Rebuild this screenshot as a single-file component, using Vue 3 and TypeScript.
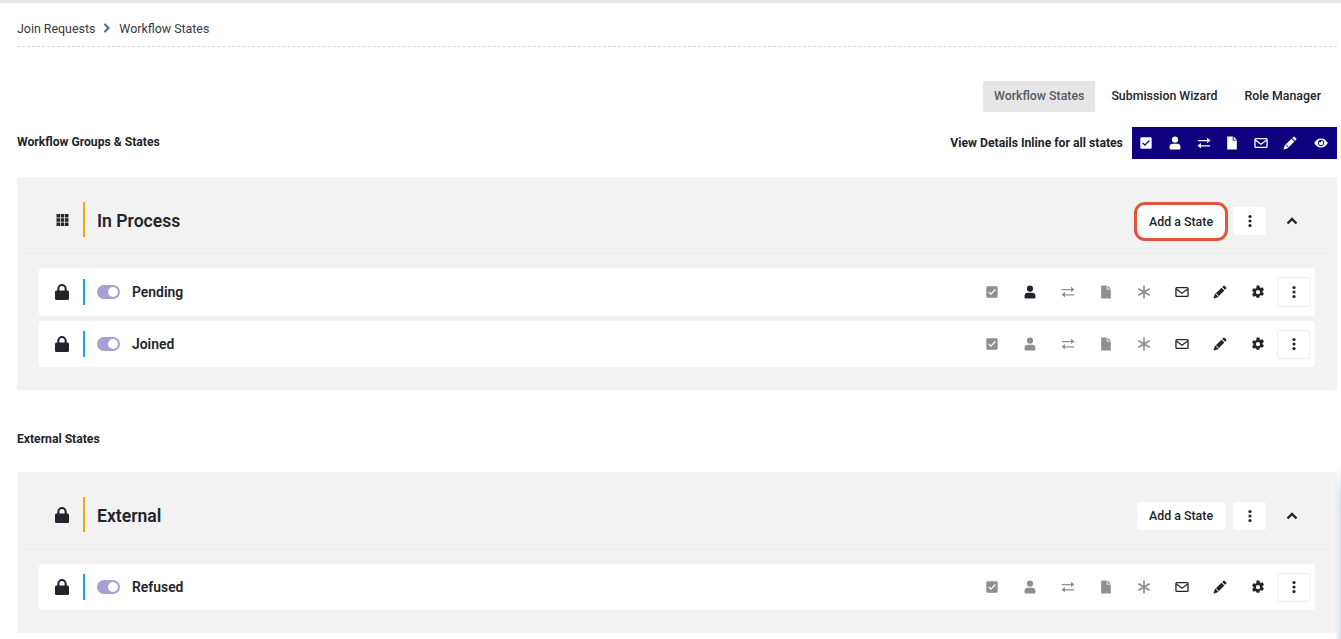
<script setup lang="ts">
interface StateRow {
  name: string
  userActive: boolean
}

interface Group {
  title: string
  icon: string
  highlight: boolean
  rows: StateRow[]
}

const groups: { heading: string; group: Group }[] = [
  {
    heading: 'Workflow Groups & States',
    group: {
      title: 'In Process',
      icon: 'grid',
      highlight: true,
      rows: [
        { name: 'Pending', userActive: true },
        { name: 'Joined', userActive: false },
      ],
    },
  },
  {
    heading: 'External States',
    group: {
      title: 'External',
      icon: 'lock',
      highlight: false,
      rows: [{ name: 'Refused', userActive: false }],
    },
  },
]

const tabs = ['Workflow States', 'Submission Wizard', 'Role Manager']
const toolbarIcons = ['check', 'user', 'swap', 'file', 'mail', 'pencil', 'eye']
</script>

<template>
  <svg class="sprite" aria-hidden="true">
    <symbol id="i-check" viewBox="0 0 16 16">
      <path fill-rule="evenodd" d="M3 1.500h10A1.500 1.500 0 0 1 14.500 3v10a1.500 1.500 0 0 1-1.500 1.500H3A1.500 1.500 0 0 1 1.500 13V3A1.500 1.500 0 0 1 3 1.500Zm9.400 4.300-1.100-1.100-4.600 4.600-2-2-1.100 1.100 3.100 3.100Z" />
    </symbol>
    <symbol id="i-user" viewBox="0 0 16 16">
      <circle cx="8" cy="4.200" r="3.500" />
      <path d="M1.800 14.700v-2.500c0-2 1.600-3.400 3.500-3.400h5.400c1.900 0 3.500 1.400 3.500 3.400v2.500c0 .5-.4.800-.8.800H2.600c-.4 0-.8-.3-.8-.8Z" />
    </symbol>
    <symbol id="i-swap" viewBox="0 0 16 16">
      <path d="M11.500 2 15.500 5l-4 3V6H1V4.500h10.500Z" />
      <path d="M4.500 8v2.500H15V12H4.500v2L.5 11Z" />
    </symbol>
    <symbol id="i-file" viewBox="0 0 16 16">
      <path d="M2.500.5h6.300v4.700h4.700v10.300h-11Z" />
      <path d="M9.800.5l3.700 3.700H9.800Z" />
    </symbol>
    <symbol id="i-star" viewBox="0 0 16 16">
      <path d="M7 .5h2v5.800l5-2.900 1 1.700L10 8l5 2.900-1 1.700-5-2.900v5.800H7V9.700l-5 2.900-1-1.700L6 8 1 5.100l1-1.700 5 2.900Z" />
    </symbol>
    <symbol id="i-mail" viewBox="0 0 16 16">
      <rect x="1.100" y="3" width="13.800" height="10" rx="1" fill="none" stroke="currentColor" stroke-width="1.500" />
      <path d="M1.500 4.500 8 9.300l6.500-4.800" fill="none" stroke="currentColor" stroke-width="1.400" />
    </symbol>
    <symbol id="i-pencil" viewBox="0 0 16 16">
      <path d="M11.700 1a1.200 1.200 0 0 1 1.700 0l1.600 1.600a1.200 1.200 0 0 1 0 1.700l-1.200 1.200-3.300-3.300Z" />
      <path fill-rule="evenodd" d="M9.700 3 13 6.300l-7.600 7.600-4.100 1.400a.5.500 0 0 1-.6-.6l1.400-4.100ZM3.100 10.300l2.700 2.700.6-.6-2.700-2.700Z" />
    </symbol>
    <symbol id="i-gear" viewBox="0 0 16 16">
      <path fill-rule="evenodd" d="M6.400.5h3.200l.4 2.100 1.200.7 2-.7 1.600 2.800-1.600 1.400v1.400l1.600 1.400-1.600 2.800-2-.7-1.200.7-.4 2.100H6.400L6 13.400l-1.200-.7-2 .7-1.600-2.800 1.600-1.400V7.800L1.200 6.400l1.600-2.800 2 .7L6 3.600ZM8 5.800a2.400 2.400 0 1 0 0 4.800 2.400 2.400 0 0 0 0-4.800Z" />
    </symbol>
    <symbol id="i-dots" viewBox="0 0 16 16">
      <circle cx="8" cy="2.800" r="1.800" />
      <circle cx="8" cy="8" r="1.800" />
      <circle cx="8" cy="13.200" r="1.800" />
    </symbol>
    <symbol id="i-eye" viewBox="0 0 16 16">
      <path fill-rule="evenodd" d="M8 2.800c3.400 0 6.200 2.100 7.800 5.200-1.600 3.100-4.400 5.200-7.800 5.200S1.800 11.100.2 8C1.800 4.900 4.600 2.800 8 2.800Zm0 1.400C6 4.200 4.400 5.900 4.400 8S6 11.800 8 11.800s3.600-1.700 3.600-3.800S10 4.200 8 4.200Zm0 1.300a2.500 2.500 0 1 1-2.500 2.500c0-.4.100-.8.300-1.100.2.300.6.600 1 .6.700 0 1.200-.5 1.200-1.200 0-.3-.1-.6-.3-.8H8Z" />
    </symbol>
    <symbol id="i-grid" viewBox="0 0 12 12">
      <path d="M0 0h3.500v3.500H0ZM4.250 0h3.500v3.500h-3.500ZM8.500 0H12v3.500H8.500ZM0 4.250h3.500v3.500H0ZM4.250 4.250h3.500v3.500h-3.500ZM8.500 4.250H12v3.500H8.500ZM0 8.500h3.500V12H0ZM4.250 8.500h3.500V12h-3.500ZM8.500 8.500H12V12H8.500Z" />
    </symbol>
    <symbol id="i-lock" viewBox="0 0 14 16">
      <path fill-rule="evenodd" d="M2.300 6.500V4.700a4.700 4.700 0 0 1 9.400 0v1.800h.7c.9 0 1.600.7 1.600 1.600v6.300c0 .9-.7 1.600-1.600 1.600H1.600C.7 16 0 15.300 0 14.400V8.100c0-.9.700-1.600 1.600-1.600ZM4.400 6.500h5.200V4.700a2.600 2.600 0 0 0-5.200 0Z" />
    </symbol>
  </svg>

  <div class="page">
    <nav class="crumbs">
      <span>Join Requests</span>
      <svg class="crumb-sep" viewBox="0 0 8 10"><path d="M1.500 1 5.500 5l-4 4" /></svg>
      <span>Workflow States</span>
    </nav>

    <div class="tabs">
      <button v-for="(tab, i) in tabs" :key="tab" class="tab" :class="{ active: i === 0 }">{{ tab }}</button>
    </div>

    <section v-for="(item, s) in groups" :key="item.heading" class="section" :class="{ second: s === 1 }">
      <div class="section-head">
        <h2>{{ item.heading }}</h2>
        <div v-if="s === 0" class="inline-details">
          <span>View Details Inline for all states</span>
          <div class="toolbar">
            <span v-for="icon in toolbarIcons" :key="icon" class="tool">
              <svg class="ico"><use :href="`#i-${icon}`" /></svg>
            </span>
          </div>
        </div>
      </div>

      <div class="group">
        <header class="group-head">
          <span class="lead">
            <svg :class="item.group.icon === 'grid' ? 'ico-grid' : 'ico-lock'"><use :href="`#i-${item.group.icon}`" /></svg>
          </span>
          <span class="bar gold"></span>
          <h3>{{ item.group.title }}</h3>
          <div class="group-actions">
            <button class="btn add" :class="{ marked: item.group.highlight }">Add a State</button>
            <button class="btn kebab"><svg class="ico"><use href="#i-dots" /></svg></button>
            <svg class="chevron" viewBox="0 0 12 8"><path d="M1.500 6.500 6 2l4.500 4.500" /></svg>
          </div>
        </header>

        <div class="rows">
          <div v-for="(row, r) in item.group.rows" :key="row.name" class="row" :class="{ tall: s === 0 && r === 0 }">
            <span class="lead"><svg class="ico-lock"><use href="#i-lock" /></svg></span>
            <span class="bar blue"></span>
            <span class="toggle"></span>
            <span class="row-name">{{ row.name }}</span>
            <div class="row-icons">
              <span class="cell muted"><svg class="ico"><use href="#i-check" /></svg></span>
              <span class="cell" :class="{ muted: !row.userActive }"><svg class="ico"><use href="#i-user" /></svg></span>
              <span class="cell muted"><svg class="ico"><use href="#i-swap" /></svg></span>
              <span class="cell muted"><svg class="ico"><use href="#i-file" /></svg></span>
              <span class="cell muted"><svg class="ico"><use href="#i-star" /></svg></span>
              <span class="cell"><svg class="ico"><use href="#i-mail" /></svg></span>
              <span class="cell"><svg class="ico"><use href="#i-pencil" /></svg></span>
              <span class="cell"><svg class="ico"><use href="#i-gear" /></svg></span>
              <button class="row-kebab"><svg class="ico"><use href="#i-dots" /></svg></button>
            </div>
          </div>
        </div>
      </div>
    </section>

    <div class="edge-shadow"></div>
  </div>
</template>

<style scoped>
.sprite {
  display: none;
}

.page {
  position: relative;
  height: 639px;
  box-sizing: border-box;
  padding: 0 4px 0 17px;
  border-top: 3px solid #e9e9e9;
  overflow: hidden;
  font-family: Roboto, "Liberation Sans", sans-serif;
  color: #212529;
}

.crumbs {
  display: flex;
  align-items: center;
  height: 44px;
  box-sizing: border-box;
  padding-top: 7px;
  border-bottom: 1px dashed #d9d9d9;
  font-size: 12.4px;
  color: #343a40;
}

.crumb-sep {
  width: 8px;
  height: 10px;
  margin: 0 8px;
  fill: none;
  stroke: #3f6f86;
  stroke-width: 2;
}

.tabs {
  display: flex;
  justify-content: flex-end;
  margin-top: 34px;
}

.tab {
  height: 31px;
  padding: 0 11px 1px;
  margin: 0 5px 0 0;
  border: 0;
  border-radius: 2px;
  background: none;
  font: 500 12.35px Roboto, "Liberation Sans", sans-serif;
  color: #212529;
}

.tab.active {
  background: #e6e6e6;
  color: #555b61;
}

.section-head {
  display: flex;
  align-items: center;
  justify-content: space-between;
  height: 32px;
  margin-top: 15px;
}

.section.second .section-head {
  margin-top: 33px;
}

h2 {
  margin: 0;
  font-size: 12.15px;
  font-weight: 700;
}

.section:not(.second) h2 {
  margin-top: -2px;
}

.inline-details {
  display: flex;
  align-items: center;
  gap: 9px;
  font-size: 12.2px;
  font-weight: 700;
}

.toolbar {
  display: flex;
  height: 32px;
  background: #0f0080;
  color: #fff;
}

.tool {
  display: flex;
  align-items: center;
  justify-content: center;
  width: 28.7px;
}

.tool:last-child {
  width: 33px;
}

.ico {
  width: 14px;
  height: 14px;
  fill: currentColor;
}

.group {
  margin-top: 18px;
  padding: 0 8px 23px;
  border-radius: 3px;
  background: #f2f2f2;
}

.section.second .group {
  margin-top: 17px;
}

.group-head {
  display: flex;
  align-items: center;
  height: 77px;
  box-sizing: border-box;
  padding: 25px 0 16px;
  border-bottom: 1px solid #ebebeb;
}

.section.second .group-head {
  height: 78px;
  padding-bottom: 17px;
}

.lead {
  display: flex;
  justify-content: center;
  flex: none;
  width: 58px;
  box-sizing: border-box;
  padding-left: 16px;
}

.ico-grid {
  width: 13px;
  height: 12px;
  fill: #212529;
}

.ico-lock {
  width: 14px;
  height: 16px;
  fill: #212529;
}

.group-head .ico-lock {
  margin-top: 1px;
}

.bar {
  flex: none;
  width: 2px;
}

.bar.gold {
  height: 35px;
  background: #e8ad0c;
}

.bar.blue {
  height: 26px;
  background: #13a7e4;
}

h3 {
  margin: 3px 0 0 12px;
  font-size: 17.6px;
  font-weight: 600;
}

.group-actions {
  display: flex;
  align-items: center;
  margin-top: 3px;
  margin-left: auto;
  padding-right: 31px;
}

.section.second .group-actions {
  margin-top: 2px;
}

.btn {
  height: 28px;
  padding: 0;
  border: 0;
  border-radius: 3px;
  background: #fff;
  font: 500 12.4px Roboto, "Liberation Sans", sans-serif;
  color: #212529;
}

.add {
  width: 88px;
}

.add.marked {
  height: 33px;
  border-radius: 8px;
  outline: 3px solid #e5533d;
}

.kebab {
  display: flex;
  align-items: center;
  justify-content: center;
  width: 33px;
  margin-left: 8px;
}

.chevron {
  width: 12px;
  height: 8px;
  margin-left: 20px;
  fill: none;
  stroke: #212529;
  stroke-width: 2.400;
}

.rows {
  display: flex;
  flex-direction: column;
  gap: 5px;
  margin: 14px 14px 0;
}

.row {
  display: flex;
  align-items: center;
  height: 46px;
  border-radius: 3px;
  background: #fff;
}

.row.tall {
  height: 48px;
}

.row .lead {
  width: 44px;
  padding-left: 2px;
}

.toggle {
  position: relative;
  flex: none;
  width: 23px;
  height: 14px;
  margin-left: 12px;
  border-radius: 7px;
  background: #a89fd2;
}

.toggle::after {
  content: "";
  position: absolute;
  top: 2px;
  right: 2px;
  width: 10px;
  height: 10px;
  border-radius: 50%;
  background: #fff;
}

.row-name {
  margin-left: 12px;
  font-size: 13.9px;
  font-weight: 600;
}

.row-icons {
  display: flex;
  align-items: center;
  margin-left: auto;
  padding-right: 5px;
}

.cell {
  display: flex;
  align-items: center;
  justify-content: center;
  width: 38px;
  color: #212529;
}

.cell.muted {
  color: #8f8f8f;
}

.row-kebab {
  display: flex;
  align-items: center;
  justify-content: center;
  width: 33px;
  height: 29px;
  padding: 0;
  border: 1px solid #eeeeee;
  border-radius: 3px;
  background: #fff;
  color: #212529;
}

.row.tall .row-kebab {
  height: 30px;
}

/* soft shadow from a panel just off the right edge */
.edge-shadow {
  position: absolute;
  top: 462px;
  right: 0;
  bottom: 0;
  width: 6px;
  background: linear-gradient(to right, rgba(205, 216, 228, 0), rgba(205, 216, 228, 0.9));
  -webkit-mask-image: linear-gradient(to bottom, transparent, #000 30px);
  mask-image: linear-gradient(to bottom, transparent, #000 30px);
}
</style>

<style>
html,
body {
  background: #fff;
}
</style>
